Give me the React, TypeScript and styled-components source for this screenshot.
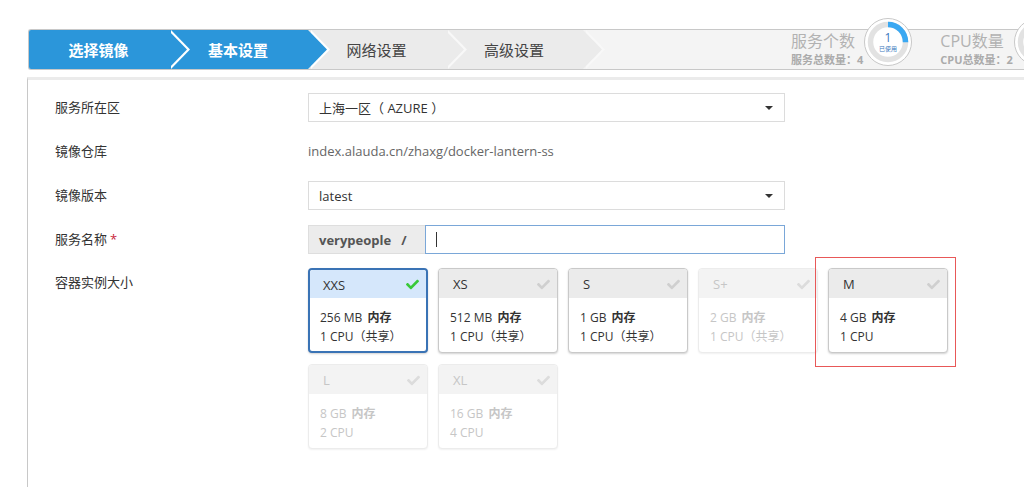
import React from "react";
import styled, { createGlobalStyle } from "styled-components";
import { FaCheck } from "react-icons/fa";

const GlobalStyle = createGlobalStyle`
  html, body {
    margin: 0;
    padding: 0;
    background: #fff;
  }
  body {
    font-family: "Open Sans", "Noto Sans CJK SC", sans-serif;
    font-size: 13px;
    color: #333;
    overflow: hidden;
  }
  * {
    box-sizing: border-box;
  }
`;

const Page = styled.div`
  width: 1024px;
  height: 487px;
  padding: 29px 0 0 27px;
  overflow: hidden;
`;

const StepBar = styled.div`
  display: flex;
  align-items: stretch;
  height: 41px;
  margin-left: 1px;
  border: 1px solid #c8c8c8;
  border-right: 0;
  border-radius: 3px 0 0 3px;
  background: #f4f4f4;
`;

const Step = styled.div<{ $active?: boolean; $w: number; $z: number }>`
  position: relative;
  z-index: ${(p) => p.$z};
  width: ${(p) => p.$w}px;
  flex-shrink: 0;
  display: flex;
  align-items: center;
  justify-content: center;
  font-size: 15px;
  font-weight: ${(p) => (p.$active ? 700 : 400)};
  color: ${(p) => (p.$active ? "#fff" : "#444")};
  background: ${(p) => (p.$active ? "#2b96da" : "#ebebeb")};
  border-radius: ${(p) => (p.$z === 4 ? "2px 0 0 2px" : "0")};

  &::before,
  &::after {
    content: "";
    position: absolute;
    top: 0;
    bottom: 0;
    width: 19px;
    clip-path: polygon(0 0, 100% 50%, 0 100%);
  }
  &::before {
    right: -22px;
    background: ${(p) => (p.$active ? "#fff" : "#f8f8f8")};
  }
  &::after {
    right: -19px;
    background: ${(p) => (p.$active ? "#2b96da" : "#ebebeb")};
  }
`;

const Stats = styled.div`
  display: flex;
  align-items: center;
  flex-shrink: 0;
  margin-left: 208px;
  gap: 28px;
`;

const Stat = styled.div`
  display: flex;
  align-items: center;
  gap: 1px;
  height: 100%;
`;

const StatText = styled.div`
  display: flex;
  flex-direction: column;
  gap: 3px;
`;

const StatTitle = styled.span`
  font-size: 16px;
  line-height: 18px;
  color: #b2b2b2;
`;

const StatSub = styled.span`
  font-size: 11px;
  line-height: 14px;
  font-weight: 700;
  color: #ababab;
`;

const Gauge = styled.svg`
  align-self: flex-start;
  margin-top: -12px;
  flex-shrink: 0;
`;

const Panel = styled.div`
  margin-top: 7px;
  height: 420px;
  border-left: 1px solid #c8c8c8;
  border-top: 3px solid #ebebeb;
  padding: 13px 0 0 27px;
`;

const Form = styled.div`
  display: flex;
  flex-direction: column;
  gap: 15px;
`;

const Row = styled.div<{ $top?: boolean }>`
  display: flex;
  align-items: ${(p) => (p.$top ? "flex-start" : "center")};
  margin-top: ${(p) => (p.$top ? "-1px" : "0")};
`;

const Label = styled.div`
  width: 253px;
  flex-shrink: 0;
  line-height: 29px;
  font-size: 13px;
  color: #333;
`;

const Required = styled.span`
  color: #c8243a;
  margin-left: 3px;
`;

const Select = styled.div`
  width: 477px;
  height: 29px;
  display: flex;
  align-items: center;
  justify-content: space-between;
  padding: 0 10px;
  border: 1px solid #dcdcdc;
  background: #fff;
  font-size: 13px;
  color: #333;
`;

const Caret = styled.span`
  width: 0;
  height: 0;
  border-left: 4px solid transparent;
  border-right: 4px solid transparent;
  border-top: 4px solid #333;
  margin-right: 1px;
`;

const Value = styled.div`
  line-height: 29px;
  font-size: 13px;
  color: #666;
`;

const InputGroup = styled.div`
  display: flex;
  width: 477px;
  height: 29px;
`;

const Addon = styled.div`
  width: 117px;
  display: flex;
  align-items: center;
  padding-left: 10px;
  background: #ececec;
  border: 1px solid #dedede;
  border-right: 0;
  font-size: 13px;
  font-weight: 700;
  color: #555;
  white-space: pre;
`;

const InputBox = styled.div`
  flex: 1;
  display: flex;
  align-items: center;
  padding-left: 10px;
  border: 1px solid #7aa7d8;
  background: #fff;
`;

const TextCursor = styled.span`
  width: 1px;
  height: 15px;
  background: #333;
`;

const Input = styled.input`
  flex: 1;
  border: 0;
  outline: none;
  background: transparent;
  font: inherit;
`;

const Cards = styled.div`
  width: 650px;
  display: flex;
  flex-wrap: wrap;
  gap: 11px 10px;
`;

type CardState = "selected" | "normal" | "disabled";

const Card = styled.div<{ $state: CardState; $mark?: boolean }>`
  position: relative;
  width: 120px;
  height: 85px;
  border-radius: 4px;
  background: #fff;
  border: ${(p) =>
    p.$state === "selected"
      ? "2px solid #3a73b5"
      : p.$state === "disabled"
      ? "1px solid #ececec"
      : "1px solid #c9c9c9"};
  box-shadow: ${(p) =>
    p.$state === "disabled"
      ? "0 1px 2px rgba(0,0,0,0.06)"
      : "0 1px 2px rgba(0,0,0,0.18)"};
  color: ${(p) => (p.$state === "disabled" ? "#c6c6c6" : "#333")};

  &::before {
    content: "";
    display: ${(p) => (p.$mark ? "block" : "none")};
    position: absolute;
    top: -12px;
    left: -14px;
    right: -9px;
    bottom: -15px;
    border: 1px solid #e85858;
    pointer-events: none;
  }
`;

const CardHead = styled.div<{ $state: CardState }>`
  height: ${(p) => (p.$state === "selected" ? "28px" : "29px")};
  display: flex;
  align-items: center;
  justify-content: space-between;
  padding: 1px 7px 0 ${(p) => (p.$state === "selected" ? "13px" : "14px")};
  border-radius: 3px 3px 0 0;
  font-size: 13px;
  background: ${(p) =>
    p.$state === "selected"
      ? "#d5e7fb"
      : p.$state === "disabled"
      ? "#f3f3f3"
      : "#ebebeb"};
`;

const Tick = styled(FaCheck)<{ $state: CardState }>`
  color: ${(p) =>
    p.$state === "selected"
      ? "#38c938"
      : p.$state === "disabled"
      ? "#dcdcdc"
      : "#cfcfcf"};
`;

const CardBody = styled.div<{ $state: CardState }>`
  padding: 10px 0 0 ${(p) => (p.$state === "selected" ? "10px" : "11px")};
  font-size: 12px;
  line-height: 19px;
`;

const Strong = styled.b`
  font-weight: 700;
  margin-left: 2px;
`;

const sizes: {
  name: string;
  mem: string;
  cpu: string;
  state: CardState;
  mark?: boolean;
}[] = [
  { name: "XXS", mem: "256 MB", cpu: "1 CPU（共享）", state: "selected" },
  { name: "XS", mem: "512 MB", cpu: "1 CPU（共享）", state: "normal" },
  { name: "S", mem: "1 GB", cpu: "1 CPU（共享）", state: "normal" },
  { name: "S+", mem: "2 GB", cpu: "1 CPU（共享）", state: "disabled" },
  { name: "M", mem: "4 GB", cpu: "1 CPU", state: "normal", mark: true },
  { name: "L", mem: "8 GB", cpu: "2 CPU", state: "disabled" },
  { name: "XL", mem: "16 GB", cpu: "4 CPU", state: "disabled" },
];

function UsageGauge({
  used,
  total,
  showLabel = true,
}: {
  used: number;
  total: number;
  showLabel?: boolean;
}) {
  const r = 17.5;
  const c = 2 * Math.PI * r;
  const part = (used / total) * c;
  return (
    <Gauge width="48" height="48" viewBox="0 0 48 48">
      <circle cx="24" cy="24" r="23.5" fill="#fff" stroke="#c8c8c8" />
      <circle cx="24" cy="24" r={r} fill="none" stroke="#e2e2e2" strokeWidth="5.5" />
      <circle
        cx="24"
        cy="24"
        r={r}
        fill="none"
        stroke="#3aa8f2"
        strokeWidth="5.5"
        strokeDasharray={`${part} ${c}`}
        transform="rotate(-90 24 24)"
      />
      {showLabel && (
        <>
          <text x="24" y="24" textAnchor="middle" fontSize="12" fill="#3a78bd" fontFamily="Open Sans, sans-serif">
            {used}
          </text>
          <text x="24" y="33" textAnchor="middle" fontSize="6" fill="#3a78bd" fontFamily="Noto Sans CJK SC, sans-serif">
            已使用
          </text>
        </>
      )}
    </Gauge>
  );
}

export default function App() {
  return (
    <>
      <GlobalStyle />
      <Page>
        <StepBar>
          <Step $active $w={139} $z={4}>
            选择镜像
          </Step>
          <Step $active $w={140} $z={3}>
            基本设置
          </Step>
          <Step $w={137} $z={2}>
            网络设置
          </Step>
          <Step $w={138} $z={1}>
            高级设置
          </Step>
          <Stats>
            <Stat>
              <StatText>
                <StatTitle>服务个数</StatTitle>
                <StatSub>服务总数量：4</StatSub>
              </StatText>
              <UsageGauge used={1} total={4} />
            </Stat>
            <Stat>
              <StatText>
                <StatTitle>CPU数量</StatTitle>
                <StatSub>CPU总数量：2</StatSub>
              </StatText>
              <UsageGauge used={1} total={2} showLabel={false} />
            </Stat>
          </Stats>
        </StepBar>

        <Panel>
          <Form>
            <Row>
              <Label>服务所在区</Label>
              <Select>
                上海一区（ AZURE ）
                <Caret />
              </Select>
            </Row>
            <Row>
              <Label>镜像仓库</Label>
              <Value>index.alauda.cn/zhaxg/docker-lantern-ss</Value>
            </Row>
            <Row>
              <Label>镜像版本</Label>
              <Select>
                latest
                <Caret />
              </Select>
            </Row>
            <Row>
              <Label>
                服务名称<Required>*</Required>
              </Label>
              <InputGroup>
                <Addon>{"verypeople   /"}</Addon>
                <InputBox>
                  <TextCursor />
                  <Input defaultValue="" />
                </InputBox>
              </InputGroup>
            </Row>
            <Row $top>
              <Label>容器实例大小</Label>
              <Cards>
                {sizes.map((s) => (
                  <Card key={s.name} $state={s.state} $mark={s.mark}>
                    <CardHead $state={s.state}>
                      {s.name}
                      <Tick $state={s.state} size={13} />
                    </CardHead>
                    <CardBody $state={s.state}>
                      <div>
                        {s.mem} <Strong>内存</Strong>
                      </div>
                      <div>{s.cpu}</div>
                    </CardBody>
                  </Card>
                ))}
              </Cards>
            </Row>
          </Form>
        </Panel>
      </Page>
    </>
  );
}
